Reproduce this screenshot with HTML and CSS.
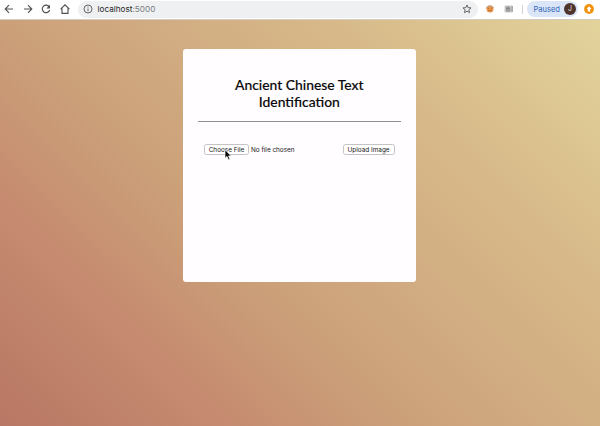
FILE: index.html
```html
<!DOCTYPE html>
<html lang="en">
<head>
<meta charset="utf-8">
<title>Ancient Chinese Text Identification</title>
<link rel="stylesheet" href="styles.css">
</head>
<body>
<header class="toolbar">
  <nav class="nav">
    <svg class="icon" viewBox="0 0 10 10"><path d="M9 5H1.3M5 1.2L1.2 5L5 8.8"/></svg>
    <svg class="icon" viewBox="0 0 10 10"><path d="M1 5h7.7M5 1.2L8.8 5L5 8.8"/></svg>
    <svg class="icon" viewBox="0 0 10 10"><path d="M8.2 2.7A3.8 3.8 0 1 0 8.7 6"/><path class="solid" d="M9 .8v3.6H5.4z"/></svg>
    <svg class="icon" viewBox="0 0 10 10"><path d="M.6 5.1L5 .8l4.4 4.3M2 4.4v4.9h6V4.4"/></svg>
  </nav>
  <div class="address">
    <svg class="info" viewBox="0 0 10 10"><circle cx="5" cy="5" r="4"/><path d="M5 4.5v2.8M5 2.6v1"/></svg>
    <span class="url">localhost<span class="port">:5000</span></span>
    <svg class="star" viewBox="0 0 10 10"><path d="M5 1l1.15 2.65 2.9.25-2.2 1.9.67 2.85L5 7.15 2.48 8.65l.67-2.85L.95 3.9l2.9-.25z"/></svg>
  </div>
  <svg class="ext-orange" viewBox="0 0 10 10"><circle cx="5" cy="5" r="3.5" fill="#e9954a"/><path d="M1.2 4.6Q2 1.5 5 1.8T8.7 4" fill="none" stroke="#b3a18f" stroke-width="1"/><path d="M3 4l1 .8M7 4l-1 .8M3.5 6.5h3" stroke="#a85c27" stroke-width=".7"/></svg>
  <svg class="ext-gray" viewBox="0 0 10 8"><rect x=".5" y=".5" width="8" height="7" rx="1" fill="#c9c9c9"/><path d="M2.7 2h2.5v1.8H2.7zM2.7 3.8h3V6h-3zM8.2 1v6" fill="none" stroke="#77797b" stroke-width=".8"/></svg>
  <span class="divider"></span>
  <div class="profile"><span>Paused</span><span class="avatar">J</span></div>
  <svg class="update" viewBox="0 0 10 10"><circle cx="5" cy="5" r="4.9" fill="#f2930d"/><path d="M5 2.2l2.5 2.7H6.2v2.5H3.8V4.9H2.5z" fill="#fff"/></svg>
</header>
<main class="page">
  <section class="card">
    <h1>Ancient Chinese Text Identification</h1>
    <form class="upload">
      <button type="button" class="choose">Choose File</button>
      <span class="status">No file chosen</span>
      <button type="button" class="submit">Upload Image</button>
    </form>
  </section>
</main>
<svg class="cursor" viewBox="0 0 8 12"><path d="M1 .7v8.5l2-1.8 1.4 3.4 1.5-.6-1.4-3.3h2.7z" fill="#050505" stroke="#fff" stroke-width=".7"/></svg>
</body>
</html>
```
FILE: styles.css
```css
* { box-sizing: border-box; }
body {
  margin: 0;
  height: 426px;
  display: flex;
  flex-direction: column;
  overflow: hidden;
  font-family: Inter, sans-serif;
}
svg { display: block; flex: none; }
.toolbar {
  height: 20px;
  flex: none;
  display: flex;
  align-items: center;
  padding: 0 0 1px 4px;
  background: #fff;
  border-bottom: 1px solid #d3cdc6;
}
.nav { display: flex; gap: 8.5px; width: 74px; flex: none; }
.icon { width: 10px; height: 10px; fill: none; stroke: #505356; stroke-width: 1.15; }
.icon .solid { fill: #505356; stroke: none; }
.address {
  width: 400px;
  height: 17px;
  flex: none;
  display: flex;
  align-items: center;
  padding: 0 6px 0 5px;
  border-radius: 9px;
  background: #eef0f2;
}
.info, .star { width: 10px; height: 10px; fill: none; stroke: #55585b; stroke-width: .9; }
.url { margin-left: 4.5px; font-size: 8.2px; color: #26282a; }
.port { color: #777b80; }
.star { margin-left: auto; }
.ext-orange { width: 10px; height: 10px; margin-left: 7px; }
.ext-gray { width: 10px; height: 8px; margin-left: 9px; }
.divider { width: 1px; height: 9px; margin-left: 8px; background: #cfd1d4; }
.profile {
  width: 51px;
  height: 16px;
  margin-left: 4px;
  flex: none;
  display: flex;
  align-items: center;
  justify-content: space-between;
  padding: 0 2px 0 6.5px;
  border-radius: 8px;
  background: #dae6f8;
  color: #2f62b7;
  font-size: 7.5px;
}
.avatar {
  width: 12px;
  height: 12px;
  border-radius: 50%;
  background: #4f342e;
  color: #e8dedb;
  font-size: 7px;
  line-height: 12px;
  text-align: center;
}
.update { width: 10px; height: 10px; margin-left: 6px; }
.page {
  flex: 1;
  padding-top: 29.4px;
  background: linear-gradient(45deg, #b87764 0%, #c68b70 23%, #cba079 40%, #d1ab82 55%, #d7b888 72%, #e2d39b 100%);
}
.card {
  width: 232.6px;
  height: 233px;
  margin-left: 183px;
  padding: 26.6px 15px 0;
  border-radius: 3px;
  background: #fffdff;
}
h1 {
  margin: 0;
  height: 46px;
  padding: 0 30px;
  border-bottom: 1px solid #929092;
  font: 500 13.9px/17px Lato, sans-serif;
  text-align: center;
  color: #080808;
  -webkit-text-stroke: .15px #080808;
}
.upload {
  display: flex;
  align-items: center;
  height: 11px;
  margin: 22px 6px 0;
  font-size: 6.4px;
  color: #171717;
}
.upload button {
  height: 11px;
  padding: 1px 0 0;
  border: 1px solid #c5c3c5;
  border-radius: 2.5px;
  background: #fff;
  font: 6.4px/8px Inter, sans-serif;
  color: #171717;
}
.choose { width: 45px; }
.status { margin-left: 2px; padding-top: 1px; }
.upload .submit { width: 52px; margin-left: auto; }
.cursor { position: absolute; left: 224px; top: 149px; width: 8px; height: 12px; }
```
